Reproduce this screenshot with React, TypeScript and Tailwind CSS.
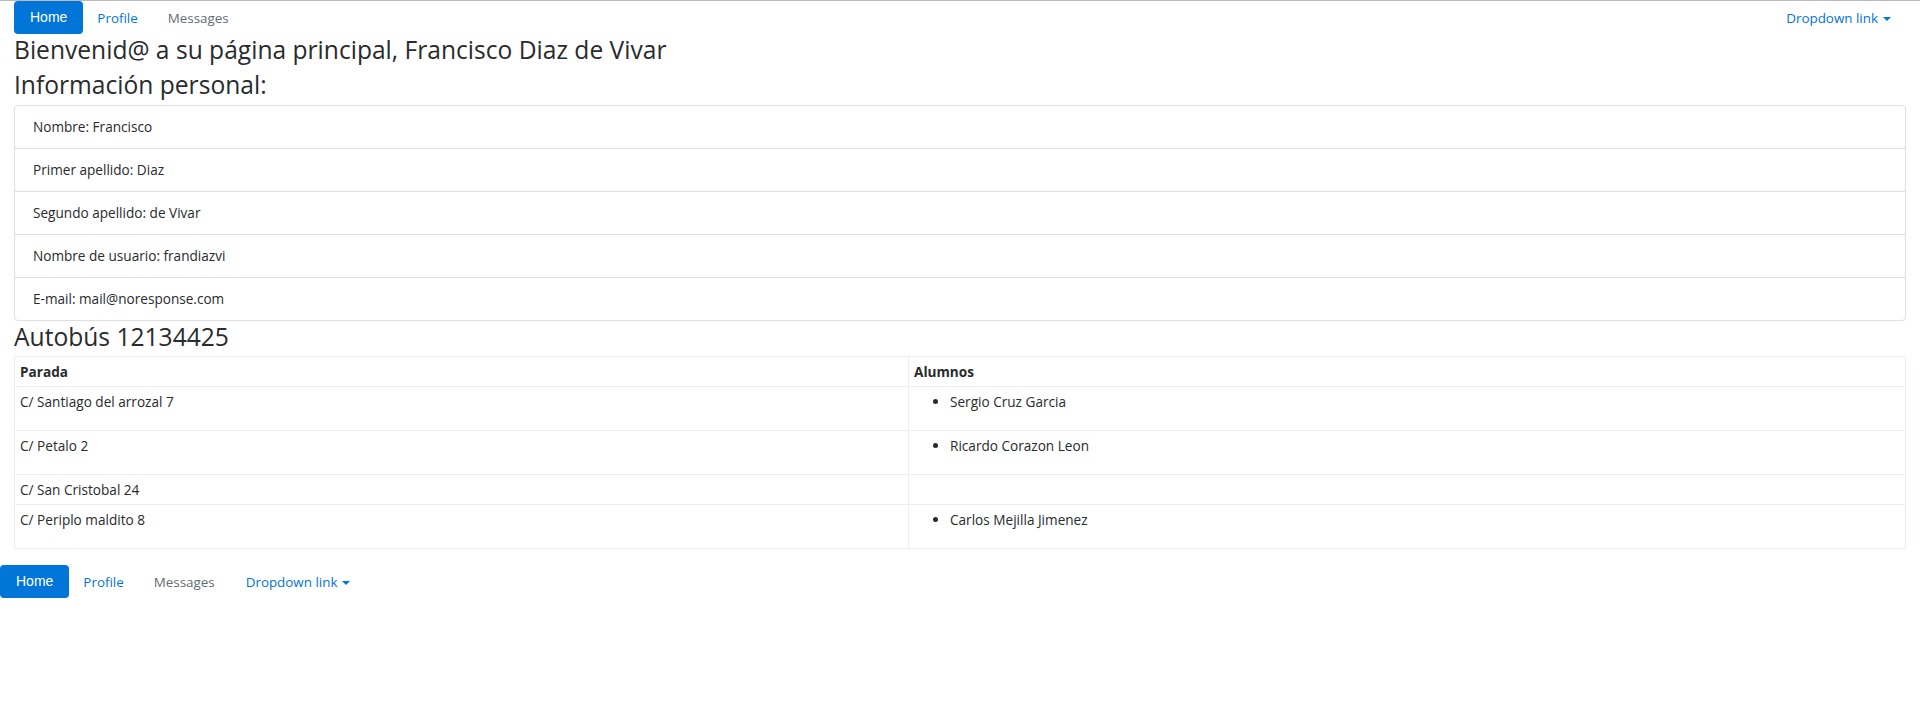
import React from "react";

function Caret() {
  return (
    <span className="ml-[5px] inline-block h-0 w-0 border-x-[4.5px] border-t-[4.5px] border-x-transparent border-t-current align-middle" />
  );
}

function Nav({ full }: { full: boolean }) {
  return (
    <nav className="flex h-[33px] items-center text-[13.4px]">
      <button className="h-[33px] rounded-[4px] bg-[#0275d8] px-[16px] font-['Liberation_Sans',Arial,sans-serif] text-[14px] text-white">
        Home
      </button>
      <a className="pl-[14px] pr-[14px] pt-[2px] text-[#0275d8]" href="#">
        Profile
      </a>
      <a className="pl-[16px] pr-[15px] pt-[2px] text-[#636c72]" href="#">
        Messages
      </a>
      <a
        className={(full ? "ml-auto " : "") + "flex items-center pl-[16px] pr-[15px] pt-[2px] text-[#0275d8]"}
        href="#"
      >
        Dropdown link
        <Caret />
      </a>
    </nav>
  );
}

const info = [
  "Nombre: Francisco",
  "Primer apellido: Diaz",
  "Segundo apellido: de Vivar",
  "Nombre de usuario: frandiazvi",
  "E-mail: mail@noresponse.com",
];

const rows: { parada: string; alumnos: string[] }[] = [
  { parada: "C/ Santiago del arrozal 7", alumnos: ["Sergio Cruz Garcia"] },
  { parada: "C/ Petalo 2", alumnos: ["Ricardo Corazon Leon"] },
  { parada: "C/ San Cristobal 24", alumnos: [] },
  { parada: "C/ Periplo maldito 8", alumnos: ["Carlos Mejilla Jimenez"] },
];

export default function App() {
  return (
    <div className="min-h-[713px] border-t border-[#bbbbbb] bg-white font-['Open_Sans','Noto_Sans',sans-serif] text-[13.6px] leading-[19px] text-[#292b2c]">
      <div className="px-[14px]">
        <Nav full={true} />
        <h4 className="mb-[2.8px] text-[24.6px] leading-[32.6px] font-normal">
          Bienvenid@ a su página principal, Francisco Diaz de Vivar
        </h4>
        <h4 className="mb-[2.8px] text-[24.6px] leading-[32.6px] font-normal">Información personal:</h4>
        <ul className="flex flex-col">
          {info.map((t, i) => (
            <li
              key={t}
              className={
                "border border-[#dfdfdf] px-[18px] py-[11px] leading-[20px] " +
                (i === 0 ? "rounded-t-[4px] " : "-mt-px ") +
                (i === info.length - 1 ? "rounded-b-[4px]" : "")
              }
            >
              {t}
            </li>
          ))}
        </ul>
        <h4 className="mb-[2.8px] text-[24.6px] leading-[32.6px] font-normal">Autobús 12134425</h4>
        <table className="mb-[16px] w-full border-collapse border border-[#eceeef]">
          <thead>
            <tr>
              <th className="w-[894px] border border-[#eceeef] px-[5px] py-[5px] text-left font-bold">Parada</th>
              <th className="border border-[#eceeef] px-[5px] py-[5px] text-left font-bold">Alumnos</th>
            </tr>
          </thead>
          <tbody>
            {rows.map((r) => (
              <tr key={r.parada}>
                <td className="border border-[#eceeef] px-[5px] py-[5px] align-top">{r.parada}</td>
                <td className="border border-[#eceeef] px-[5px] py-[5px] align-top">
                  {r.alumnos.length > 0 && (
                    <ul className="mb-[14px] list-disc pl-[36px]">
                      {r.alumnos.map((a) => (
                        <li key={a}>{a}</li>
                      ))}
                    </ul>
                  )}
                </td>
              </tr>
            ))}
          </tbody>
        </table>
      </div>
      <Nav full={false} />
    </div>
  );
}
